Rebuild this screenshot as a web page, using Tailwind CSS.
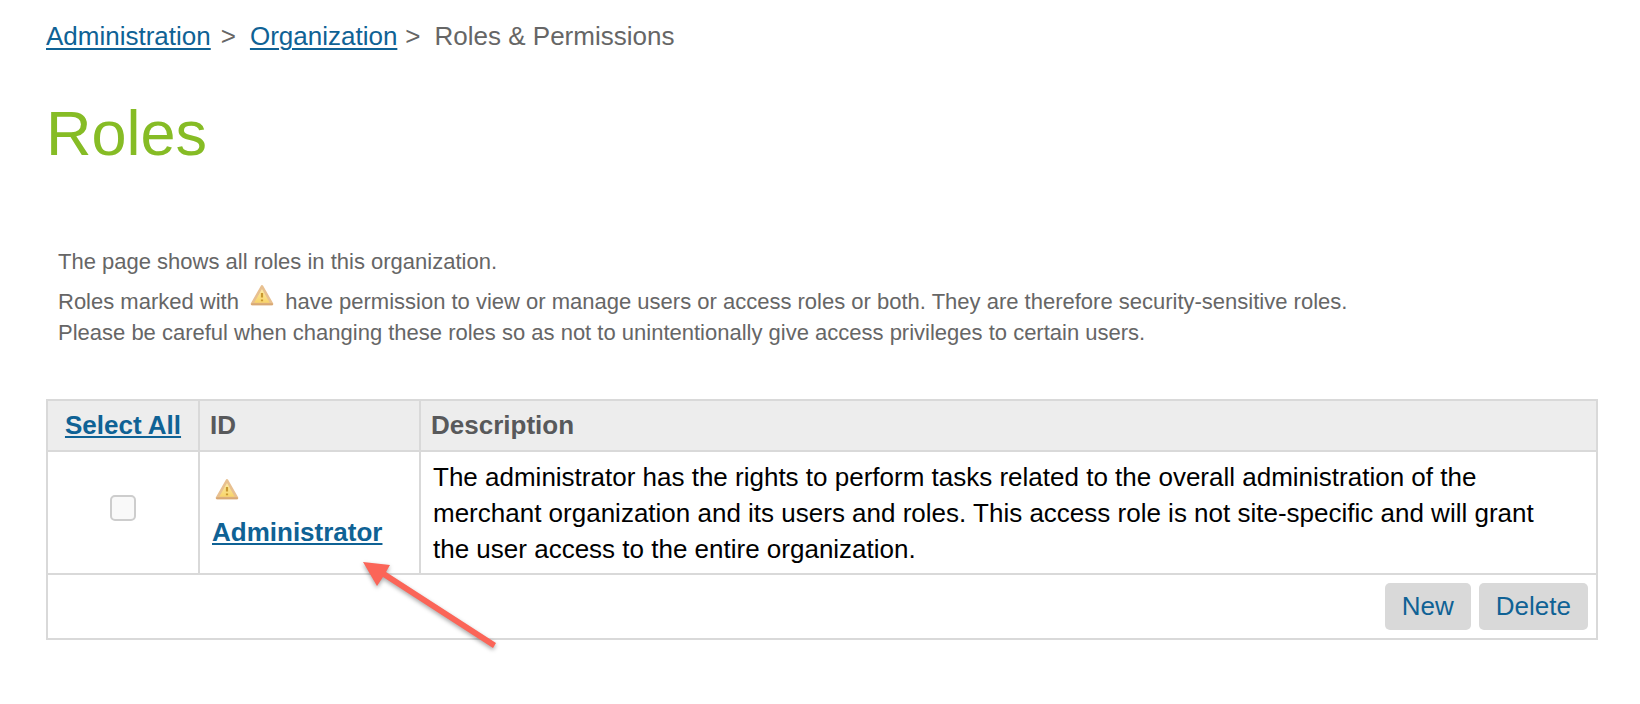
<!DOCTYPE html>
<html lang="en">
<head>
<meta charset="utf-8">
<meta name="viewport" content="width=device-width, initial-scale=1">
<title>Roles &amp; Permissions</title>
<script src="https://cdn.jsdelivr.net/npm/@tailwindcss/browser@4"></script>
</head>
<body class="bg-white pt-5 pr-[42px] pb-10 pl-[46px] font-['Liberation_Sans',Arial,sans-serif] text-[26px] leading-8 text-[#666666]">
<svg class="absolute size-0" aria-hidden="true">
  <defs>
    <linearGradient id="amber" x1="0" y1="0" x2="0" y2="1">
      <stop offset="0" stop-color="#fdf0b4"/>
      <stop offset="1" stop-color="#f8d263"/>
    </linearGradient>
    <symbol id="warning" viewBox="0 0 24 22">
      <path d="M12 2.4 L22 20 H2 Z" fill="url(#amber)" stroke="#e8c090" stroke-width="2.6" stroke-linejoin="round"/>
      <path d="M2 20.2 H22" stroke="#d8a874" stroke-width="2" stroke-linecap="round"/>
      <path d="M12 9 V13.5 M12 15.4 V17.2" stroke="#c9982f" stroke-width="2.2"/>
    </symbol>
  </defs>
</svg>

<nav aria-label="Breadcrumb">
  <ol class="flex flex-wrap">
    <li><a href="#" class="text-[#0f6295] underline decoration-2 underline-offset-3">Administration</a><span class="mr-3.5 ml-2.5">&gt;</span></li>
    <li><a href="#" class="text-[#0f6295] underline decoration-2 underline-offset-3">Organization</a><span class="mr-3.5 ml-2">&gt;</span></li>
    <li aria-current="page">Roles &amp; Permissions</li>
  </ol>
</nav>

<main>
  <h1 class="mt-[45px] text-[63px] leading-[72px] text-[#86bc25]">Roles</h1>

  <div class="mt-[77px] pl-3 text-[22px] leading-[31px]">
    <p>The page shows all roles in this organization.</p>
    <p class="mt-[7px]">Roles marked with <svg class="mr-[5px] ml-[5px] inline-block h-[22px] w-6 align-[3px]" role="img" aria-label="warning sign"><use href="#warning"/></svg> have permission to view or manage users or access roles or both. They are therefore security-sensitive roles.<br>Please be careful when changing these roles so as not to unintentionally give access privileges to certain users.</p>
  </div>

  <div class="relative mt-[51px]">
    <table class="w-full table-fixed border-collapse border-2 border-[#d9d9d9]">
      <colgroup><col class="w-[152px]"><col class="w-[221px]"><col></colgroup>
      <thead>
        <tr class="h-[51px] bg-[#ededed] text-left text-[#58595b]">
          <th scope="col" class="border-2 border-[#d9d9d9] pb-0.5 text-center"><a href="#" class="text-[#0f6295] underline decoration-2 underline-offset-2">Select All</a></th>
          <th scope="col" class="border-2 border-[#d9d9d9] px-2.5 pb-0.5">ID</th>
          <th scope="col" class="border-2 border-[#d9d9d9] px-2.5 pb-0.5">Description</th>
        </tr>
      </thead>
      <tbody>
        <tr class="h-[123px]">
          <td class="border-2 border-[#d9d9d9] pb-2.5"><input type="checkbox" aria-label="Select Administrator" class="mx-auto block size-[26px] appearance-none rounded-[5px] border-2 border-[#cdcdcd] bg-[#f9f9f9]"></td>
          <td class="border-2 border-[#d9d9d9] px-3">
            <svg class="mb-4 ml-[3px] h-[22px] w-6" role="img" aria-label="Security-sensitive role"><use href="#warning"/></svg>
            <a href="#" class="block w-fit font-bold text-[#0f6295] underline decoration-2 underline-offset-2">Administrator</a>
          </td>
          <td class="border-2 border-[#d9d9d9] pr-12 pl-3 leading-9 text-black">The administrator has the rights to perform tasks related to the overall administration of the merchant organization and its users and roles. This access role is not site-specific and will grant the user access to the entire organization.</td>
        </tr>
      </tbody>
      <tfoot>
        <tr>
          <td colspan="3" class="border-2 border-[#d9d9d9] p-2">
            <div class="flex justify-end gap-2">
              <button type="button" class="h-[47px] rounded-[5px] bg-[#d9d9d9] px-[17px] pb-0.5 text-[#0f6295]">New</button>
              <button type="button" class="h-[47px] rounded-[5px] bg-[#d9d9d9] px-[17px] pb-0.5 text-[#0f6295]">Delete</button>
            </div>
          </td>
        </tr>
      </tfoot>
    </table>

    <!-- Callout arrow laid over the table, pointing at the role link -->
    <svg class="pointer-events-none absolute top-[158px] left-[311px] h-[98px] w-[146px] drop-shadow-[0_2px_2px_rgba(0,0,0,0.35)]" viewBox="0 0 146 98" aria-hidden="true">
      <path d="M6 5 L33 8 L29 15 L139 86 L136 91 L26 20 L20 29 Z" fill="#fb6558"/>
    </svg>
  </div>
</main>
</body>
</html>
